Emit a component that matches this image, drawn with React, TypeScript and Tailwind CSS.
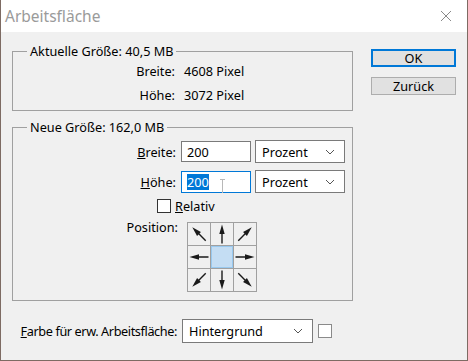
import React from "react";

const font = { fontFamily: '"Noto Sans", "Liberation Sans", sans-serif' };

// arrow pointing up, rotated per cell
const Arrow = ({ deg }: { deg: number }) => (
  <svg width="22" height="22" viewBox="0 0 22 22" style={{ transform: `rotate(${deg}deg)` }}>
    <line x1="11" y1="20.5" x2="11" y2="9" stroke="#1a1a1a" strokeWidth="1.4" />
    <polygon points="11,1.5 8.3,11 13.7,11" fill="#1a1a1a" />
  </svg>
);

const Chevron = () => (
  <svg width="10" height="6" viewBox="0 0 10 6" className="shrink-0">
    <polyline points="1,1 5,5 9,1" fill="none" stroke="#555" strokeWidth="1" />
  </svg>
);

const Select = ({ value, className }: { value: string; className: string }) => (
  <div
    className={`flex items-center justify-between bg-white border border-[#7a7a7a] pl-[6px] pr-[9px] ${className}`}
  >
    <span>{value}</span>
    <Chevron />
  </div>
);

const cells = [-45, 0, 45, -90, null, 90, -135, 180, 135];

export default function App() {
  return (
    <div
      style={font}
      className="w-[468px] h-[361px] flex flex-col bg-[#f0f0f0] border-l border-r border-b border-[#7d6b63] text-[12.7px] leading-[16px] text-black overflow-hidden"
    >
      {/* title bar */}
      <div className="h-[32px] shrink-0 bg-white flex items-center justify-between pl-[4px] pr-[15px]">
        <span className="text-[15.5px] text-[#9a9a9a]">Arbeitsfläche</span>
        <svg width="12" height="12" viewBox="0 0 12 12">
          <path d="M1 1 L11 11 M11 1 L1 11" stroke="#8a8a8a" strokeWidth="1" />
        </svg>
      </div>

      <div className="flex pl-[11px] pt-[11px] pr-[11px]">
        {/* left column */}
        <div className="w-[341px] flex flex-col">
          <fieldset className="border border-[#a0a0a0] pb-[7px]">
            <legend className="ml-[14px] px-[3px]">Aktuelle Größe: 40,5 MB</legend>
            <div className="grid grid-cols-[162px_1fr] gap-x-[9px] gap-y-[8px] mt-[4px]">
              <span className="text-right">Breite:</span>
              <span>4608 Pixel</span>
              <span className="text-right">Höhe:</span>
              <span>3072 Pixel</span>
            </div>
          </fieldset>

          <fieldset className="border border-[#a0a0a0] mt-[8px] pb-[8px]">
            <legend className="ml-[14px] px-[3px]">Neue Größe: 162,0 MB</legend>
            <div className="flex flex-col mt-[5px]">
              <div className="flex items-center h-[23px]">
                <span className="w-[163px] text-right">
                  <span className="underline">B</span>reite:
                </span>
                <div className="ml-[5px] w-[70px] h-[21px] bg-white border border-[#7a7a7a] flex items-center pl-[5px]">
                  200
                </div>
                <Select value="Prozent" className="ml-[4px] w-[90px] h-[23px]" />
              </div>
              <div className="flex items-center h-[23px] mt-[7px]">
                <span className="w-[163px] text-right">
                  <span className="underline">H</span>öhe:
                </span>
                <div className="relative ml-[5px] w-[70px] h-[22px] bg-white border border-[#0078d7] flex items-center pl-[5px]">
                  <span className="bg-[#0078d7] text-white">200</span>
                  <span className="absolute left-[40px] top-[7px] w-[1px] h-[14px] bg-[#b8b8b8]" />
                  <span className="absolute left-[38px] top-[7px] w-[5px] h-[1px] bg-[#b8b8b8]" />
                </div>
                <Select value="Prozent" className="ml-[4px] w-[90px] h-[23px]" />
              </div>
              <div className="flex items-center h-[16px] mt-[5px] pl-[144px]">
                <div className="w-[14px] h-[14px] bg-white border border-[#333]" />
                <span className="ml-[4px]">
                  <span className="underline">R</span>elativ
                </span>
              </div>
              <div className="flex items-start mt-[8px]">
                <span className="w-[165px] text-right mt-[-3px]">Position:</span>
                <div className="ml-[9px] grid grid-cols-3 w-[70px] border-t border-l border-[#a0a0a0]">
                  {cells.map((d, i) =>
                    d === null ? (
                      <div key={i} className="h-[23px] border-r border-b border-[#a0a0a0] p-0">
                        <div className="w-full h-full bg-[#c4ddf3] border border-[#99c9ef]" />
                      </div>
                    ) : (
                      <div
                        key={i}
                        className="h-[23px] border-r border-b border-[#a0a0a0] flex items-center justify-center"
                      >
                        <Arrow deg={d} />
                      </div>
                    )
                  )}
                </div>
              </div>
            </div>
          </fieldset>

          <div className="flex items-center mt-[18px] h-[24px]">
            <div className="w-[165px] shrink-0 flex justify-end">
              <span className="whitespace-nowrap tracking-[-0.4px]">
                <span className="underline">F</span>arbe für erw. Arbeitsfläche:
              </span>
            </div>
            <Select value="Hintergrund" className="ml-[5px] w-[131px] h-[24px]" />
            <div className="ml-[5px] w-[14px] h-[14px] bg-white border border-[#8a8a8a]" />
          </div>
        </div>

        {/* buttons */}
        <div className="ml-auto w-[85px] flex flex-col pt-[6px] gap-[10px]">
          <div className="h-[18px] bg-[#e1e1e1] border-2 border-[#0078d7] flex items-center justify-center">
            OK
          </div>
          <div className="h-[18px] bg-[#e1e1e1] border border-[#adadad] flex items-center justify-center">
            Zurück
          </div>
        </div>
      </div>
    </div>
  );
}
